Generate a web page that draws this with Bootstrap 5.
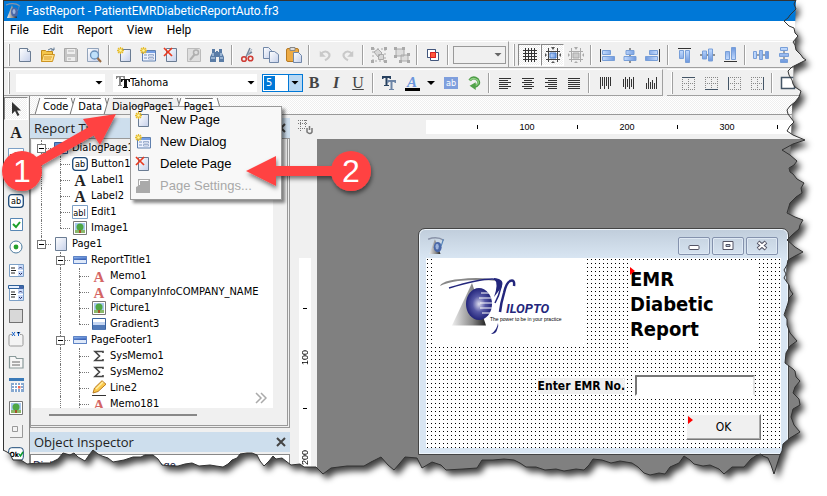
<!DOCTYPE html>
<html lang="en">
<head>
<meta charset="utf-8">
<meta name="viewport" content="width=device-width, initial-scale=1">
<title>FastReport - PatientEMRDiabeticReportAuto.fr3</title>
<link href="https://cdn.jsdelivr.net/npm/bootstrap@5.3.0/dist/css/bootstrap.min.css" rel="stylesheet">
<style>
body{font-family:"DejaVu Sans Condensed","DejaVu Sans",sans-serif;font-size:11px;line-height:16px;color:#000;background:#fff}
.shell{height:100vh;padding-left:3px;overflow:hidden}
.app{background:#f0f0f0;border-left:1px solid #333;border-top:1px solid #333}
button{background:none;border:0;padding:0;color:inherit}
svg{display:block;flex:none}
.titlebar{background:#0078d7;color:#fff;height:20px;padding-left:1px;gap:5px;font:12px/20px Roboto,sans-serif}
.menubar{background:#fff;height:19px;padding-left:6px;gap:14px;font:12px/18px Roboto,sans-serif}
.menubar a{color:#000;text-decoration:none}
.tools{height:28px;padding-top:1px;background:#f0f0f0}
.strip{height:27px;border-bottom:1px solid #a0a0a0;border-top:1px solid #fff;border-right:1px solid #a0a0a0;padding-left:4px;white-space:nowrap}
.strip.wide{flex:1 0 auto;border-right:0}
.grip{width:2px;height:22px;border-right:1px solid #a0a0a0;border-left:1px solid #fff;margin-right:3px;flex:none}
.tb{width:23px;height:22px;display:flex;align-items:center;justify-content:center;flex:none}
.tb.on{border:1px solid #fff;border-top-color:#888;border-left-color:#888;background:repeating-conic-gradient(#fff 0 25%,#eee 0 50%) 0 0/2px 2px}
.sep{width:8px;height:20px;flex:none;background:linear-gradient(90deg,transparent 3px,#a0a0a0 3px 4px,#fff 4px 5px,transparent 5px)}
.combo{position:relative;height:18px;background:#fff;flex:none}
.combo select{appearance:none;border:0;background:none;width:100%;height:100%;padding:0 14px 0 3px;font-size:11px;line-height:16px;outline:0;color:#000}
.combo::after{content:"";position:absolute;right:2px;top:7px;width:8px;height:4px;background:currentColor;clip-path:polygon(0 0,100% 0,50% 100%);pointer-events:none}
.c-style{width:89px;margin-left:3px}.c-font{width:144px;margin-left:8px}.c-font select{padding-left:17px}
.c-font svg{position:absolute;left:3px;top:1px}
.c-size{width:41px;border:1px solid #0078d7;margin-left:5px}
.c-size::before{content:"";position:absolute;right:0;top:0;bottom:0;width:14px;background:#b8d8f3;border-left:1px solid #0078d7}
.c-size select{position:relative;width:11px;background:#0078d7;color:#fff;padding:0 2px;display:block;height:14px;line-height:14px;margin:1px}
.c-size::after{right:3px;top:6px}
.c-zoom{width:53px;background:#f0f0f0;border:1px solid #999;color:#666;margin:0 2px 0 1px}
.c-zoom::after{top:6px;right:3px}
.lt{width:22px;font:bold 16px/20px "Liberation Serif",serif;color:#444}
.toolcol{width:26px;padding-top:1px;border-right:1px solid #888}
.toolcol .tb{width:24px;height:23px}
.tabs{height:19px;padding:2px 0 0 9px;border-bottom:1px solid #999;background:repeating-conic-gradient(#fff 0 25%,#efefef 0 50%) 0 0/2px 2px;gap:2px}
.pt{position:relative;height:16px;line-height:15px;padding:0 4px;border-top:1px solid #777;background:#fff;white-space:nowrap}
.pt::before,.pt::after{content:"";position:absolute;top:-1px;bottom:0;width:5px;background:inherit;border-left:1px solid #777}
.pt::before{left:-2px;transform:skewX(-16deg);z-index:0}
.pt::after{right:-2px;transform:skewX(16deg);border-left:0;border-right:1px solid #777}
.pt span{position:relative;z-index:1}
.pt.act{background:#f0f0f0}
.side{width:260px;padding-top:3px}
.ph{background:#cddeed;height:20px;padding:0 4px;font:13px/20px "Open Sans",sans-serif;color:#222}
.treebox{border:1px solid #999;border-width:1px 3px 3px 1px;border-style:solid double double solid;height:290px;padding:1px 14px 0 1px;margin-bottom:4px}
.tree{background:#fff;height:268px;padding:0;margin:0;list-style:none;overflow:hidden;position:relative}
.tree li{display:flex;height:16px;align-items:center;white-space:nowrap}
.tree b{width:19px;height:16px;flex:none;position:relative;display:flex;align-items:center;justify-content:center;font-weight:normal}
.tree b.v::before,.tree b.e::before{content:"";position:absolute;left:9px;top:0;height:16px;border-left:1px dotted #777}
.tree b.e::before{height:8px}
.tree b.h::after{content:"";position:absolute;left:9px;right:0;top:8px;border-top:1px dotted #777}
.tree b.t i{width:9px;height:9px;border:1px solid #777;background:#fff linear-gradient(#000,#000) center/5px 1px no-repeat;z-index:1;position:relative}
.tree li>span{padding:0 2px}
.sel{background:#f0f0f0}
.hsc{width:148px;height:2px;background:#888;margin:6px 0 0 17px}
.more-mark{position:absolute;right:6px;bottom:2px}
.insp{border:1px solid #888;border-bottom:0;background:#fff;height:40px;margin-top:2px;padding:3px 2px}
.insp select{border:0;appearance:none;background:none;width:100%;padding:0;color:#224}
.work{padding-left:7px}
.topr{height:24px;padding:5px 0}
.corner{width:129px;height:14px}
.ruler{background:#fff;font:9px/14px "Liberation Sans",sans-serif}
.ruler div{flex:none;width:50px;text-align:center;display:flex;align-items:center;justify-content:center}
.ruler i{width:1px;height:4px;background:#000}
.across{height:14px;padding-left:26px;overflow:hidden}
.down{width:12px;margin:119px 6px 0 2px;padding-top:25px;overflow:hidden}
.down div{width:12px;height:50px}.down i{width:4px;height:1px}
.down span{writing-mode:vertical-rl;transform:rotate(180deg);line-height:12px}
.canvas{background:#808080;position:relative;overflow:hidden}
.dlg{position:absolute;left:101px;top:89px;width:371px;border:1px solid #444;border-radius:7px 7px 0 0;background:linear-gradient(#c0cddb,#d9e6f3 30px);padding:0 7px 6px;box-shadow:inset 0 0 0 1px #eef5fb}
.dt{height:29px;padding:8px 3px 0 1px}
.dt button{width:32px;height:18px;border:1px solid #8492ad;border-radius:2px;box-shadow:inset 0 0 0 1px #dfe9f4;display:flex;align-items:center;justify-content:center}
.form{background:conic-gradient(from 270deg at 1px 1px,#000 90deg,#fff 0) 1px 1px/4px 4px;padding:1px 20px 8px 6px}
.logo{background:#fff;width:154px;height:88px}
.rt{background:#fff;width:130px;height:88px;margin:3px 3px 0 0;padding:5px 0 0 2px;font:bold 20px/25px "DejaVu Sans Condensed","DejaVu Sans",sans-serif;position:relative}
.flag{position:absolute;left:2px;top:5px;width:5px;height:8px;background:red;clip-path:polygon(0 0,100% 50%,0 100%)}
.fr{margin-top:25px;gap:10px;padding-right:6px}
.fr label{font-weight:bold;background:#f0f0f0;font-size:12px;line-height:16px}
.fr input{width:120px;height:21px;border:2px solid #777;border-color:#777 #e4e4e4 #fff #777;border-radius:0;outline:0;background:#fff}
.ok{position:relative;width:75px;height:26px;background:#f0f0f0;border:1px solid;border-color:#fff #777 #777 #fff;box-shadow:inset -1px -1px #aaa;margin-top:18px;font-size:12px}
.ok .flag{left:1px;top:1px}
.ctx{position:absolute;left:130px;top:106px;width:152px;height:94px;background:#f8f8f8;border:1px solid #999;box-shadow:3px 3px 3px #0007;padding:2px 0 0;font:13px/22px "Liberation Sans",sans-serif}
.ctx button{display:flex;align-items:center;height:22px;width:100%;padding-left:4px;gap:9px;text-align:left}
.ctx button:disabled{color:#a8a8a8}
.over{position:absolute;inset:0;width:100%;height:100%;pointer-events:none}
.over text{font:32px "Liberation Sans",sans-serif;fill:#fff;text-anchor:middle}
</style>
<script src="https://cdn.jsdelivr.net/npm/bootstrap@5.3.0/dist/js/bootstrap.bundle.min.js"></script>
</head>
<body>
<svg width="0" height="0" class="position-absolute" aria-hidden="true">
<defs>
<linearGradient id="pg" x2="1" y2="1"><stop stop-color="#fff"/><stop offset="1" stop-color="#c5d0ea"/></linearGradient>
<linearGradient id="bl" x2="1" y2="0"><stop stop-color="#c4dcff"/><stop offset="1" stop-color="#6d97dd"/></linearGradient>
<linearGradient id="bd" x2=".3" y2="1"><stop stop-color="#d5e5fb"/><stop offset=".5" stop-color="#6d97dd"/><stop offset="1" stop-color="#3f65b8"/></linearGradient>
<linearGradient id="gy"><stop stop-color="#eee"/><stop offset=".6" stop-color="#888"/><stop offset="1" stop-color="#222"/></linearGradient>
<radialGradient id="gl"><stop stop-color="#dde"/><stop offset=".5" stop-color="#5557a5"/><stop offset="1" stop-color="#22247a"/></radialGradient>
<symbol id="page" viewBox="0 0 16 16"><path d="M2.500 1.500h8l3 3v10h-11z" fill="url(#pg)" stroke="#6a7c93"/><path d="M10.500 1.500v3h3" fill="#fff" stroke="#6a7c93"/></symbol>
<symbol id="sheet" viewBox="0 0 16 16"><path d="M2.500 1.500h11v13h-11z" fill="url(#pg)" stroke="#6a7c93"/></symbol>
<symbol id="star" viewBox="0 0 16 16"><path d="M1 1l5 5M6 1L1 6M3.500 0v7M0 3.500h7" stroke="#e6bd2c" stroke-width="1.300"/><circle cx="3.500" cy="3.500" r="1.300" fill="#fff6a0"/></symbol>
<symbol id="newp" viewBox="0 0 16 16"><path d="M3.500 2.500h10v12h-10z" fill="url(#pg)" stroke="#6a7c93"/><use href="#star"/></symbol>
<symbol id="newd" viewBox="0 0 16 16"><path d="M2.500 3.500h13v10.500h-13z" fill="#eef3ff" stroke="#6080ae"/><path d="M3 4h12v2H3z" fill="#77a0e4"/><path d="M4 8h3M4 11h3" stroke="#7b93bb"/><path d="M8.500 7.500h5v1.500h-5zM8.500 10.500h5v1.500h-5z" fill="#fff" stroke="#7b93bb" stroke-width=".7"/><use href="#star"/></symbol>
<symbol id="del" viewBox="0 0 16 16"><path d="M3.500 1.500h10v13h-10z" fill="url(#pg)" stroke="#6a7c93"/><path d="M1 1l8 8M9 1L1 9" stroke="#e83a1f" stroke-width="1.700"/></symbol>
<symbol id="open" viewBox="0 0 16 16"><path d="M1.500 14.500v-11h4l1 1h6v3" fill="#f5c64a" stroke="#c08a1c"/><path d="M1.500 14.500l2-7h11l-2 7z" fill="#ffe08a" stroke="#cd9422"/><path d="M4 10h8M4 12h7" stroke="#d99a26"/><path d="M8 3q3-3 6 0M14 .5V3h-3" fill="none" stroke="#5f7791"/></symbol>
<symbol id="save" viewBox="0 0 16 16"><path d="M1.500 1.500h12l1 1v12h-13z" fill="#c6c6c6" stroke="#a8a8a8"/><path d="M4 2h8v5H4zM4 10h8v4H4z" fill="#eee"/><path d="M5 4h6M5 12h3" stroke="#b5b5b5"/></symbol>
<symbol id="prev" viewBox="0 0 16 16"><path d="M1.500 1.500h11v13h-11z" fill="url(#pg)" stroke="#93a4bb"/><circle cx="8.500" cy="8" r="4" fill="#bfe0fa" stroke="#6b90b9" stroke-width="1.300"/><path d="M11.500 11l3.500 4" stroke="#9a6b42" stroke-width="2"/></symbol>
<symbol id="tool" viewBox="0 0 16 16"><path d="M1.500 1.500h12l1 1v12h-13z" fill="#dedede" stroke="#bbb"/><path d="M4 13l5-6" stroke="#b0b0b0" stroke-width="2"/><circle cx="10" cy="5.500" r="2.500" fill="none" stroke="#b0b0b0" stroke-width="1.500"/></symbol>
<symbol id="find" viewBox="0 0 16 16"><path d="M3 2h3v3h1v-1h2v1h1V2h3v4l2 4v5h-5v-5H7v5H1v-5l2-4z" fill="#5a7ca6"/><path d="M2 11h4M11 11h3M4 6v3M12 6v3" stroke="#d6e8fb"/></symbol>
<symbol id="cut" viewBox="0 0 16 16"><path d="M10 1L6 10M7 8l5-3" stroke="#75869b" stroke-width="1.500"/><path d="M7 9l5-7" stroke="#a7b6c7"/><circle cx="4" cy="12" r="2.300" fill="none" stroke="#cf3c35" stroke-width="1.600"/><circle cx="10.500" cy="11.500" r="2.300" fill="none" stroke="#cf3c35" stroke-width="1.600"/></symbol>
<symbol id="copy" viewBox="0 0 16 16"><path d="M.5.5h5l3 3v8h-8z" fill="url(#pg)" stroke="#7187a8"/><path d="M6.500 4.500h5l4 3v8h-9z" fill="url(#pg)" stroke="#7187a8"/></symbol>
<symbol id="paste" viewBox="0 0 16 16"><rect x=".5" y="1.500" width="12" height="13" rx="1.500" fill="#edab45" stroke="#b67922"/><path d="M4 .5h5v3H4z" fill="#ddd" stroke="#888"/><path d="M7.500 5.500h5l3 3v7h-8z" fill="url(#pg)" stroke="#7187a8"/></symbol>
<symbol id="undo" viewBox="0 0 16 16"><path d="M3 7q6-6 10 0 1 4-5 7" fill="none" stroke="#c9c9c9" stroke-width="2.500"/><path d="M2 3v7h7z" fill="#c9c9c9"/></symbol>
<symbol id="redo" viewBox="0 0 16 16"><use href="#undo" transform="matrix(-1 0 0 1 16 0)"/></symbol>
<symbol id="grp" viewBox="0 0 16 16"><path d="M2 2h12v12H2z" fill="none" stroke="#aaa" stroke-dasharray="2 2"/><path d="M3 5l4-3 4 4-4 4zM7.500 7.500h5v5h-5z" fill="#d7d7d7" stroke="#aaa"/><path d="M0 0h3v3H0zM13 0h3v3h-3zM0 13h3v3H0zM13 13h3v3h-3z" fill="#aaa"/></symbol>
<symbol id="ungrp" viewBox="0 0 16 16"><path d="M2 2h8v7H2zM7 8h7v6H7z" fill="#ddd" stroke="#aaa"/><path d="M0 0h3v3H0zM8 0h3v3H8zM0 8h3v3H0zM13 6h3v3h-3zM5 13h3v3H5zM13 13h3v3h-3z" fill="#aaa"/></symbol>
<symbol id="over2" viewBox="0 0 16 16"><path d="M2.500 2.500h8v8h-8zM5.500 5.500h8v8h-8z" fill="#fff" stroke="#42567c"/><path d="M2.500 10.500v-8h8" fill="none" stroke="#42567c"/><path d="M5.500 5.500h5v5h-5z" fill="#ff5a3d" stroke="#d22"/></symbol>
<symbol id="grid" viewBox="0 0 16 16"><path d="M3.500 1v14M6.500 1v14M9.500 1v14M12.500 1v14M1 3.500h14M1 6.500h14M1 9.500h14M1 12.500h14" stroke="#333"/></symbol>
<symbol id="snap" viewBox="0 0 16 16"><path d="M3.500 1v14M12.500 1v14M1 4.500h14M1 12.500h14" stroke="#444"/><path d="M5 6h6v5H5z" fill="url(#bl)" stroke="#447bcb"/><path d="M6 0h4L8 3zM6 16h4l-2-2zM0 6v4l2-2zM16 6v4l-2-2z" fill="#555"/></symbol>
<symbol id="snapg" viewBox="0 0 16 16"><path d="M3.500 1v14M12.500 1v14M1 4.500h14M1 12.500h14" stroke="#aaa"/><path d="M5 6h6v5H5z" fill="#ccc" stroke="#aaa"/><path d="M6 0h4L8 3zM6 16h4l-2-2zM0 6v4l2-2zM16 6v4l-2-2z" fill="#aaa"/></symbol>
<symbol id="al" viewBox="0 0 16 16"><path d="M1.500 2v13" stroke="#333"/><path d="M3.500 3.500h8v4h-8zM3.500 9.500h12v4h-12z" fill="url(#bl)" stroke="#789fd8"/></symbol>
<symbol id="ac" viewBox="0 0 16 16"><path d="M8 1v15" stroke="#333"/><path d="M4 3.500h8v4H4zM2 9.500h12v4H2z" fill="url(#bl)" stroke="#789fd8"/></symbol>
<symbol id="ar" viewBox="0 0 16 16"><use href="#al" transform="matrix(-1 0 0 1 16 0)"/></symbol>
<symbol id="at" viewBox="0 0 16 16"><use href="#al" transform="matrix(0 1 1 0 0 0)"/></symbol>
<symbol id="am" viewBox="0 0 16 16"><use href="#ac" transform="matrix(0 1 1 0 0 0)"/></symbol>
<symbol id="ab" viewBox="0 0 16 16"><use href="#al" transform="matrix(0 -1 1 0 0 16)"/></symbol>
<symbol id="sh" viewBox="0 0 16 16"><path d="M0 8h16" stroke="#456"/><path d="M.5 4.500h3v7h-3zM6.500 3.500h3v9h-3zM12.500 4.500h3v7h-3z" fill="url(#bl)" stroke="#789fd8"/></symbol>
<symbol id="sv" viewBox="0 0 16 16"><use href="#sh" transform="matrix(0 1 1 0 0 0)"/></symbol>
<symbol id="tt" viewBox="0 0 14 14"><path d="M0 1h9v3H8L7 2H5v8h1v1H2v-1h1V2L1 3v1H0z" fill="#888"/><path d="M5 4h9v3h-1l-1-2h-1v7h1v1H7v-1h1V5H7L6 7H5z" fill="#111"/></symbol>
<symbol id="tb2" viewBox="0 0 16 16"><path d="M1 1h9v3H9L8 3H6.500v7H8v1H3v-1h1.500V3H3L2 4H1z" fill="#27415f"/><path d="M6 5h9v3h-1l-1-1h-1.500v7H13v1H8v-1h1.500V7H8L7 8H6z" fill="#6d85a6"/></symbol>
<symbol id="rot" viewBox="0 0 16 16"><path d="M3 5Q7 0 12 4q4 6-4 8" fill="none" stroke="#4b9a45" stroke-width="3.500"/><path d="M3 5Q7 1 12 4.500q3 5-4 7" fill="none" stroke="#90d184" stroke-width="1.500"/><path d="M10 7v9L3 11z" fill="#51a24a"/></symbol>
<symbol id="tl" viewBox="0 0 16 16"><path d="M2 3.500h12M2 5.500h9M2 7.500h12M2 9.500h9M2 11.500h12M2 13.500h9" stroke="#333"/></symbol>
<symbol id="tc" viewBox="0 0 16 16"><path d="M2 3.500h12M4 5.500h8M2 7.500h12M4 9.500h8M2 11.500h12M4 13.500h8" stroke="#333"/></symbol>
<symbol id="tr" viewBox="0 0 16 16"><path d="M2 3.500h12M5 5.500h9M2 7.500h12M5 9.500h9M2 11.500h12M5 13.500h9" stroke="#333"/></symbol>
<symbol id="tj" viewBox="0 0 16 16"><path d="M2 3.500h12M2 5.500h12M2 7.500h12M2 9.500h12M2 11.500h12M2 13.500h12" stroke="#333"/></symbol>
<symbol id="v1" viewBox="0 0 16 16"><path d="M3.500 2v12M5.500 2v9M7.500 2v12M9.500 2v9M11.500 2v12M13.500 2v9" stroke="#333"/></symbol>
<symbol id="v2" viewBox="0 0 16 16"><path d="M3.500 4v8M5.500 2v12M7.500 4v8M9.500 2v12M11.500 4v8M13.500 2v12" stroke="#333"/></symbol>
<symbol id="v3" viewBox="0 0 16 16"><path d="M3.500 8v6M5.500 3v11M7.500 7v7M9.500 5v9M11.500 8v6M13.500 2v12" stroke="#333"/></symbol>
<symbol id="bx" viewBox="0 0 16 16"><path d="M2.500 2v12M8.500 2v12M14.500 2v12M2 2.500h13M2 8.500h13M2 14.500h13" stroke="#888" stroke-dasharray="1 1"/></symbol>
<symbol id="bt" viewBox="0 0 16 16"><use href="#bx"/><path d="M2 2.500h13" stroke="#456"/></symbol>
<symbol id="bb" viewBox="0 0 16 16"><use href="#bx"/><path d="M2 14.500h13" stroke="#456"/></symbol>
<symbol id="ble" viewBox="0 0 16 16"><use href="#bx"/><path d="M2.500 2v13" stroke="#456"/></symbol>
<symbol id="bri" viewBox="0 0 16 16"><use href="#bx"/><path d="M14.500 2v13" stroke="#456"/></symbol>
<symbol id="ball" viewBox="0 0 16 16"><path d="M1.500 2.500h13v11h-13z" fill="#fff" stroke="#456" stroke-width="1.500"/></symbol>
<symbol id="cur" viewBox="0 0 16 16"><path d="M4 1v12l3-3 2.500 5 2-1L9 9.500h4z" fill="#333"/></symbol>
<symbol id="btn" viewBox="0 0 16 16"><rect x=".7" y="1.700" width="14.600" height="12.600" rx="3" fill="#fff" stroke="#1d4a78" stroke-width="1.300"/><text x="8" y="11" text-anchor="middle" font-family="DejaVu Sans Condensed,sans-serif" font-size="9">ab</text></symbol>
<symbol id="edt" viewBox="0 0 16 16"><path d="M.5 1.500h15v13H.5z" fill="#fff" stroke="#7da0c6"/><text x="7.500" y="11.500" text-anchor="middle" font-family="DejaVu Sans Condensed,sans-serif" font-size="9">abl</text></symbol>
<symbol id="okb" viewBox="0 0 16 16"><rect x=".7" y="1.700" width="14.600" height="12.600" rx="3" fill="#fff" stroke="#1d4a78"/><text x="1.500" y="10.500" font-family="DejaVu Sans Condensed,sans-serif" font-size="7" font-weight="bold">Ok</text><path d="M11 8l1.500 2L15 6" fill="none" stroke="#0a9a2a" stroke-width="1.500"/></symbol>
<symbol id="chk" viewBox="0 0 16 16"><path d="M2.500 2.500h12v12h-12z" fill="#fff" stroke="#5887b4"/><path d="M5 8l3 3 4-5" fill="none" stroke="#1ca02a" stroke-width="2"/></symbol>
<symbol id="rad" viewBox="0 0 16 16"><circle cx="8" cy="8" r="6" fill="#fff" stroke="#4d7b9f"/><circle cx="8" cy="8" r="2.400" fill="#25a02c"/></symbol>
<symbol id="lst" viewBox="0 0 16 16"><path d="M1.500 2.500h14v12h-14z" fill="#fff" stroke="#7da0c6"/><path d="M10 3h5v5h-5zM10 9h5v5h-5z" fill="#c9dbfb"/><path d="M3 6h4M3 8.500h5M3 11h4" stroke="#222"/><path d="M11 6.500l1.500-1.500L14 6.500M11 11l1.500 1.500L14 11" fill="none" stroke="#225"/></symbol>
<symbol id="cmb" viewBox="0 0 16 16"><use href="#lst" y="1"/><path d="M.5.500h15v3H.5z" fill="#e5efff" stroke="#2f6098"/><path d="M11 1h4v3h-4z" fill="#46a"/></symbol>
<symbol id="pnl" viewBox="0 0 16 16"><path d="M1.500 1.500h13v13h-13z" fill="#d8d8d8" stroke="#000" stroke-dasharray="1 1"/></symbol>
<symbol id="gbx" viewBox="0 0 16 16"><rect x="1" y="3.500" width="14" height="11.500" rx="1.500" fill="#f4f4f4" stroke="#999"/><path d="M4 1h8v4H4z" fill="#f4f4f4"/><path d="M4 1l3 4M7 1L4 5M9 1l1.500 2L12 1M10.500 3v2" stroke="#1560c8"/></symbol>
<symbol id="pgc" viewBox="0 0 16 16"><path d="M1.500 5V2.500h6l1 2h6.500v9.500H1.500z" fill="#f7f7f7" stroke="#8a9a9a" stroke-width="1.200"/><path d="M4 8h8M4 11h8" stroke="#666"/></symbol>
<symbol id="cal" viewBox="0 0 16 16"><path d="M1 1h15v3H1z" fill="#3a7ab8"/><path d="M3 6h13v9H3z" fill="#86a8d0"/><path d="M4 8.500h11M4 11.500h11M6.500 6v9M9.500 6v9M12.500 6v9" stroke="#fff"/><path d="M10 9h2.500v2.500H10z" fill="#e65"/></symbol>
<symbol id="pic" viewBox="0 0 16 16"><path d="M1.500 1.500h13v13h-13z" fill="#fff" stroke="#777"/><path d="M3 3h10v10H3z" fill="#a8c8ee"/><path d="M3 10h10v3H3z" fill="#8ab96a"/><circle cx="8" cy="7" r="3.500" fill="#4fa745"/><path d="M8 10v3" stroke="#a5522a" stroke-width="2"/></symbol>
<symbol id="bev" viewBox="0 0 16 16"><path d="M2 2h12v12H2z" fill="#f3f3f3"/><path d="M14.500 2v12.500H2" fill="none" stroke="#999"/><path d="M4.500 8.500v-5h5v5z" fill="none" stroke="#999"/></symbol>
<symbol id="dlgi" viewBox="0 0 16 16"><path d="M1.500 2.500h13v11h-13z" fill="#fff" stroke="#38619e"/><path d="M2 3h12v4H2z" fill="#5f8bcf"/></symbol>
<symbol id="band" viewBox="0 0 16 16"><path d="M1 4h14v8H1z" fill="#3d6ac1"/><path d="M1 4h14v4H1z" fill="url(#bd)"/><path d="M1 8h14v3.500H1z" fill="#dfe9f9"/><path d="M1.500 4.500h13v7h-13z" fill="none" stroke="#5e83c4"/></symbol>
<symbol id="grad" viewBox="0 0 16 16"><path d="M1.500 2.500h13v11h-13z" fill="#fff" stroke="#38619e"/><path d="M2 6h12v3H2z" fill="#c4d6f3"/><path d="M2 9h12v5H2z" fill="#5079b8"/></symbol>
<symbol id="pen" viewBox="0 0 16 16"><path d="M2 13l1.500-5L11 .7l4 3.500-8 7.300z" fill="#fbc94b" stroke="#b87b25"/><path d="M5 9l7-7" stroke="#fff0a8" stroke-width="1.500"/><path d="M1 15.500h14" stroke="#333"/></symbol>
<symbol id="la" viewBox="0 0 16 16"><text x="8" y="14" text-anchor="middle" font-family="Liberation Serif,serif" font-weight="bold" font-size="16" fill="#222">A</text></symbol>
<symbol id="lr" viewBox="0 0 16 16"><text x="8" y="13.500" text-anchor="middle" font-family="Liberation Serif,serif" font-weight="bold" font-size="15" fill="#d46565">A</text></symbol>
<symbol id="sum" viewBox="0 0 16 16"><path d="M12 5V3.500H4L8.500 8 4 12.500h8V11" fill="none" stroke="#444" stroke-width="1.600"/></symbol>
<symbol id="sgray" viewBox="0 0 16 16"><path d="M3 1h12v14H1V9l2-1z" fill="#aaa"/><path d="M4.500 7V2.500h9" fill="none" stroke="#fff"/></symbol>
<symbol id="app" viewBox="0 0 16 16"><path d="M7 2L2 15h10z" fill="url(#gy)"/><ellipse cx="9.500" cy="9" rx="3.500" ry="4.500" fill="#4a68a8"/><ellipse cx="9" cy="8.500" rx="1.500" ry="2.500" fill="#9db4dc"/><path d="M1 2q8-3 14 1" fill="none" stroke="#8a93a8" stroke-width="1.300"/><path d="M14.500 2q-1 4-2 6" stroke="#5584b8" fill="none"/></symbol>
</defs></svg>

<div class="shell position-relative">
<div class="app d-flex flex-column h-100">
  <header class="titlebar d-flex align-items-center"><svg width="16" height="16"><use href="#app"/></svg><span>FastReport - PatientEMRDiabeticReportAuto.fr3</span></header>
  <nav class="menubar d-flex" aria-label="Main"><a href="#">File</a><a href="#">Edit</a><a href="#">Report</a><a href="#">View</a><a href="#">Help</a></nav>

  <div class="tools d-flex" role="toolbar" aria-label="Standard">
    <div class="strip d-flex align-items-center"><span class="grip"></span>
      <button class="tb" aria-label="New"><svg width="16" height="16"><use href="#page"/></svg></button>
      <button class="tb" aria-label="Open"><svg width="16" height="16"><use href="#open"/></svg></button>
      <button class="tb" aria-label="Save"><svg width="16" height="16"><use href="#save"/></svg></button>
      <button class="tb" aria-label="Preview"><svg width="16" height="16"><use href="#prev"/></svg></button><span class="sep"></span>
      <button class="tb" aria-label="New page"><svg width="16" height="16"><use href="#newp"/></svg></button>
      <button class="tb" aria-label="New dialog"><svg width="16" height="16"><use href="#newd"/></svg></button>
      <button class="tb" aria-label="Delete page"><svg width="16" height="16"><use href="#del"/></svg></button>
      <button class="tb" aria-label="Page settings"><svg width="16" height="16"><use href="#tool"/></svg></button>
      <button class="tb" aria-label="Find"><svg width="16" height="16"><use href="#find"/></svg></button><span class="sep"></span>
      <button class="tb" aria-label="Cut"><svg width="16" height="16"><use href="#cut"/></svg></button>
      <button class="tb" aria-label="Copy"><svg width="16" height="16"><use href="#copy"/></svg></button>
      <button class="tb" aria-label="Paste"><svg width="16" height="16"><use href="#paste"/></svg></button><span class="sep"></span>
      <button class="tb" aria-label="Undo"><svg width="14" height="14"><use href="#undo"/></svg></button>
      <button class="tb" aria-label="Redo"><svg width="14" height="14"><use href="#redo"/></svg></button><span class="sep"></span>
      <button class="tb" aria-label="Group"><svg width="16" height="16"><use href="#grp"/></svg></button>
      <button class="tb" aria-label="Ungroup"><svg width="16" height="16"><use href="#ungrp"/></svg></button><span class="sep"></span>
      <button class="tb" aria-label="Overlap"><svg width="16" height="16"><use href="#over2"/></svg></button><span class="sep"></span>
      <div class="combo c-zoom"><select aria-label="Zoom"><option></option></select></div>
    </div>
    <div class="strip wide d-flex align-items-center"><span class="grip"></span>
      <button class="tb on" aria-label="Show grid"><svg width="16" height="16"><use href="#grid"/></svg></button>
      <button class="tb on" aria-label="Align to grid"><svg width="16" height="16"><use href="#snap"/></svg></button>
      <button class="tb" aria-label="Fit to grid"><svg width="16" height="16"><use href="#snapg"/></svg></button><span class="sep"></span>
      <button class="tb" aria-label="Align left"><svg width="16" height="16"><use href="#al"/></svg></button>
      <button class="tb" aria-label="Align centre"><svg width="16" height="16"><use href="#ac"/></svg></button>
      <button class="tb" aria-label="Align right"><svg width="16" height="16"><use href="#ar"/></svg></button><span class="sep"></span>
      <button class="tb" aria-label="Align top"><svg width="16" height="16"><use href="#at"/></svg></button>
      <button class="tb" aria-label="Align middle"><svg width="16" height="16"><use href="#am"/></svg></button>
      <button class="tb" aria-label="Align bottom"><svg width="16" height="16"><use href="#ab"/></svg></button><span class="sep"></span>
      <button class="tb" aria-label="Space horizontally"><svg width="16" height="16"><use href="#sh"/></svg></button>
      <button class="tb" aria-label="Space vertically"><svg width="16" height="16"><use href="#sv"/></svg></button>
    </div>
  </div>
  <div class="tools d-flex" role="toolbar" aria-label="Text">
    <div class="strip d-flex align-items-center me-1"><span class="grip"></span>
      <div class="combo c-style"><select aria-label="Style"><option></option></select></div>
      <div class="combo c-font"><svg width="14" height="14"><use href="#tt"/></svg><select aria-label="Font"><option>Tahoma</option></select></div>
      <div class="combo c-size"><select aria-label="Size"><option>5</option></select></div>
      <button class="tb lt">B</button><button class="tb lt fst-italic">I</button><button class="tb lt fw-normal text-decoration-underline">U</button><span class="sep"></span>
      <button class="tb" aria-label="Font settings"><svg width="16" height="16"><use href="#tb2"/></svg></button>
      <button class="tb" aria-label="Font colour"><svg width="16" height="18" viewBox="0 0 16 18"><text x="8" y="13" text-anchor="middle" font-family="Liberation Serif,serif" font-style="italic" font-weight="bold" font-size="15" fill="#6b96dd">A</text><path d="M1 14h15v3H1z"/></svg></button>
      <button class="tb" style="width:16px" aria-label="Colour list"><svg width="8" height="4"><path d="M0 0h8L4 4z"/></svg></button>
      <button class="tb" aria-label="Highlight"><svg width="14" height="12" viewBox="0 0 14 12"><path d="M0 0h14v12H0z" fill="#7f9fdd"/><text x="7" y="9" text-anchor="middle" font-size="9" fill="#fff">ab</text></svg></button>
      <button class="tb" aria-label="Rotation"><svg width="14" height="14"><use href="#rot"/></svg></button><span class="sep"></span>
      <button class="tb" aria-label="Text left"><svg width="16" height="16"><use href="#tl"/></svg></button>
      <button class="tb" aria-label="Text centre"><svg width="16" height="16"><use href="#tc"/></svg></button>
      <button class="tb" aria-label="Text right"><svg width="16" height="16"><use href="#tr"/></svg></button>
      <button class="tb" aria-label="Justify"><svg width="16" height="16"><use href="#tj"/></svg></button><span class="sep"></span>
      <button class="tb" aria-label="Text top"><svg width="16" height="16"><use href="#v1"/></svg></button>
      <button class="tb" aria-label="Text middle"><svg width="16" height="16"><use href="#v2"/></svg></button>
      <button class="tb" aria-label="Text bottom"><svg width="16" height="16"><use href="#v3"/></svg></button>
    </div>
    <div class="strip wide d-flex align-items-center"><span class="grip"></span>
      <button class="tb" aria-label="Top line"><svg width="16" height="16"><use href="#bt"/></svg></button>
      <button class="tb" aria-label="Bottom line"><svg width="16" height="16"><use href="#bb"/></svg></button>
      <button class="tb" aria-label="Left line"><svg width="16" height="16"><use href="#ble"/></svg></button>
      <button class="tb" aria-label="Right line"><svg width="16" height="16"><use href="#bri"/></svg></button><span class="sep"></span>
      <button class="tb" aria-label="All lines"><svg width="16" height="16"><use href="#ball"/></svg></button>
    </div>
  </div>

  <div class="d-flex flex-grow-1 overflow-hidden">
    <div class="toolcol flex-shrink-0" role="toolbar" aria-label="Objects">
      <button class="tb on" aria-label="Select"><svg width="16" height="16"><use href="#cur"/></svg></button>
      <button class="tb" aria-label="Label"><svg width="16" height="16"><use href="#la"/></svg></button>
      <button class="tb" aria-label="Edit"><svg width="16" height="16"><use href="#edt"/></svg></button>
      <button class="tb" aria-label="Memo"><svg width="16" height="16"><use href="#edt"/></svg></button>
      <button class="tb" aria-label="Button"><svg width="16" height="16"><use href="#btn"/></svg></button>
      <button class="tb" aria-label="Check box"><svg width="16" height="16"><use href="#chk"/></svg></button>
      <button class="tb" aria-label="Radio"><svg width="16" height="16"><use href="#rad"/></svg></button>
      <button class="tb" aria-label="List"><svg width="16" height="16"><use href="#lst"/></svg></button>
      <button class="tb" aria-label="Combo"><svg width="16" height="16"><use href="#cmb"/></svg></button>
      <button class="tb" aria-label="Panel"><svg width="16" height="16"><use href="#pnl"/></svg></button>
      <button class="tb" aria-label="Group box"><svg width="16" height="16"><use href="#gbx"/></svg></button>
      <button class="tb" aria-label="Page control"><svg width="16" height="16"><use href="#pgc"/></svg></button>
      <button class="tb" aria-label="Date"><svg width="16" height="16"><use href="#cal"/></svg></button>
      <button class="tb" aria-label="Image"><svg width="16" height="16"><use href="#pic"/></svg></button>
      <button class="tb" aria-label="Bevel"><svg width="16" height="16"><use href="#bev"/></svg></button>
      <button class="tb" aria-label="Bit button"><svg width="16" height="16"><use href="#okb"/></svg></button>
    </div>
    <div class="d-flex flex-column flex-grow-1 overflow-hidden">
      <div class="tabs d-flex flex-shrink-0">
        <button class="pt"><span>Code</span></button><button class="pt"><span>Data</span></button><button class="pt act"><span>DialogPage1</span></button><button class="pt"><span>Page1</span></button>
      </div>
      <div class="d-flex flex-grow-1 overflow-hidden">
        <aside class="side flex-shrink-0">
          <div class="ph d-flex justify-content-between align-items-center"><span>Report Tree</span><button aria-label="Close tree"><svg width="10" height="10"><path d="M1 1l8 8M9 1L1 9" stroke="#444" stroke-width="2"/></svg></button></div>
          <div class="treebox">
            <ul class="tree">
              <li><b class="t v h"><i></i></b><b><svg width="16" height="16"><use href="#dlgi"/></svg></b><span class="sel">DialogPage1</span></li>
              <li><b class="v"></b><b class="v h"></b><b><svg width="16" height="16"><use href="#btn"/></svg></b><span>Button1</span></li>
              <li><b class="v"></b><b class="v h"></b><b><svg width="16" height="16"><use href="#la"/></svg></b><span>Label1</span></li>
              <li><b class="v"></b><b class="v h"></b><b><svg width="16" height="16"><use href="#la"/></svg></b><span>Label2</span></li>
              <li><b class="v"></b><b class="v h"></b><b><svg width="16" height="16"><use href="#edt"/></svg></b><span>Edit1</span></li>
              <li><b class="v"></b><b class="e h"></b><b><svg width="16" height="16"><use href="#pic"/></svg></b><span>Image1</span></li>
              <li><b class="t e h"><i></i></b><b><svg width="16" height="16"><use href="#sheet"/></svg></b><span>Page1</span></li>
              <li><b></b><b class="t v h"><i></i></b><b><svg width="16" height="16"><use href="#band"/></svg></b><span>ReportTitle1</span></li>
              <li><b></b><b class="v"></b><b class="v h"></b><b><svg width="16" height="16"><use href="#lr"/></svg></b><span>Memo1</span></li>
              <li><b></b><b class="v"></b><b class="v h"></b><b><svg width="16" height="16"><use href="#lr"/></svg></b><span>CompanyInfoCOMPANY_NAME</span></li>
              <li><b></b><b class="v"></b><b class="v h"></b><b><svg width="16" height="16"><use href="#pic"/></svg></b><span>Picture1</span></li>
              <li><b></b><b class="v"></b><b class="e h"></b><b><svg width="16" height="16"><use href="#grad"/></svg></b><span>Gradient3</span></li>
              <li><b></b><b class="t v h"><i></i></b><b><svg width="16" height="16"><use href="#band"/></svg></b><span>PageFooter1</span></li>
              <li><b></b><b class="v"></b><b class="v h"></b><b><svg width="16" height="16"><use href="#sum"/></svg></b><span>SysMemo1</span></li>
              <li><b></b><b class="v"></b><b class="v h"></b><b><svg width="16" height="16"><use href="#sum"/></svg></b><span>SysMemo2</span></li>
              <li><b></b><b class="v"></b><b class="v h"></b><b><svg width="16" height="16"><use href="#pen"/></svg></b><span>Line2</span></li>
              <li><b></b><b class="v"></b><b class="v h"></b><b><svg width="16" height="16"><use href="#lr"/></svg></b><span>Memo181</span></li>
              <li class="more-mark"><svg width="12" height="12"><path d="M1 1l5 5-5 5M6 1l5 5-5 5" fill="none" stroke="#aaa" stroke-width="1.500"/></svg></li>
            </ul>
            <div class="hsc"></div>
          </div>
          <div class="ph d-flex justify-content-between align-items-center"><span>Object Inspector</span><button aria-label="Close inspector"><svg width="10" height="10"><path d="M1 1l8 8M9 1L1 9" stroke="#444" stroke-width="2"/></svg></button></div>
          <div class="insp"><select aria-label="Object"><option>DialogPage1: TfrxDialogPage</option></select></div>
        </aside>
        <main class="work d-flex flex-column flex-grow-1 overflow-hidden">
          <div class="topr d-flex flex-shrink-0">
            <div class="corner flex-shrink-0"><svg width="18" height="16"><path d="M1 .5h10M1 3.500h10M1 8.500h8M3.500 0v11M8.500 0v8" stroke="#777" stroke-dasharray="1 1"/><path d="M10 8v4q3 3 5 0V8M12.500 6v4" fill="none" stroke="#777" stroke-width="1.500"/></svg></div>
            <div class="ruler across d-flex flex-grow-1"><div><i></i></div><div>100</div><div><i></i></div><div>200</div><div><i></i></div><div>300</div><div><i></i></div></div>
          </div>
          <div class="d-flex flex-grow-1 overflow-hidden">
            <div class="ruler down flex-shrink-0"><div><i></i></div><div><span>100</span></div><div><i></i></div><div><span>200</span></div></div>
            <div class="canvas flex-grow-1">
              <section class="dlg" aria-label="Dialog">
                <div class="dt d-flex">
                  <svg width="18" height="18" class="me-auto"><use href="#app"/></svg>
                  <div class="d-flex" style="gap:2px">
                    <button aria-label="Minimise"><svg width="12" height="12"><rect x="1" y="5.500" width="10" height="4" rx="1" fill="#fff" stroke="#556"/></svg></button>
                    <button aria-label="Maximise"><svg width="12" height="12"><path d="M1 1.500h10v8H1z" fill="#fff" stroke="#556"/><path d="M4 4.500h4v2H4z" fill="#bcd" stroke="#556"/></svg></button>
                    <button aria-label="Close"><svg width="12" height="12"><path d="M2 2l8 7M10 2L2 9" stroke="#556" stroke-width="4"/><path d="M2.500 2.500l7 6M9.500 2.500l-7 6" stroke="#fff" stroke-width="2"/></svg></button>
                  </div>
                </div>
                <div class="form">
                  <div class="d-flex justify-content-between">
                    <div class="logo"><svg width="154" height="88" viewBox="432 259 154 88" role="img" aria-label="Filopto">
                      <path d="M472 283L452 325.500h34z" fill="url(#gy)"/>
                      <ellipse cx="479" cy="304" rx="13" ry="16" fill="url(#gl)"/>
                      <path d="M481 293h9M479 298h12M480 303h12M480 308h12M482 313h9" stroke="#fff"/>
                      <path d="M440 286q2-7 36-8 15 0 22 3-18-2-40 0-12 2-18 5z" fill="#888"/>
                      <path d="M449 288q30-9 43-9 11 0 9 8-2 9-6 16" fill="none" stroke="#23267c" stroke-width="1.500"/>
                      <path d="M494 278q12 1 7 10l-7 9q5-14 0-18z" fill="#23267c"/>
                      <path d="M514 286q1-7-4-5-4 2-6 12-3 10-4 19" fill="none" stroke="#23267c" stroke-width="2.500"/>
                      <path d="M498 323q-1 7-7 11 5 0 6-4 2-4 1-7z" fill="#23267c"/>
                      <text x="506" y="313" font-family="Roboto,sans-serif" font-style="italic" font-weight="bold" font-size="13" fill="#23267c">ILOPTO</text>
                      <text x="490" y="321" font-family="Liberation Sans,sans-serif" font-size="5">The power to be in your practice</text>
                    </svg></div>
                    <div class="rt">EMR<br>Diabetic<br>Report<span class="flag"></span></div>
                  </div>
                  <div class="fr d-flex justify-content-end align-items-center"><label for="emr">Enter EMR No.</label><input id="emr" type="text"></div>
                  <div class="d-flex justify-content-end"><button class="ok">OK<span class="flag"></span></button></div>
                </div>
              </section>
            </div>
          </div>
        </main>
      </div>
    </div>
  </div>
</div>

<div class="ctx" role="menu">
  <button role="menuitem"><svg width="16" height="16"><use href="#newp"/></svg>New Page</button>
  <button role="menuitem"><svg width="16" height="16"><use href="#newd"/></svg>New Dialog</button>
  <button role="menuitem"><svg width="16" height="16"><use href="#del"/></svg>Delete Page</button>
  <button role="menuitem" disabled><svg width="16" height="16"><use href="#sgray"/></svg>Page Settings...</button>
</div>

<svg class="over" viewBox="0 0 827 496" preserveAspectRatio="none">
  <defs>
    <filter id="soft" x="-10%" y="-10%" width="120%" height="120%"><feGaussianBlur stdDeviation="3"/></filter>
    <filter id="drop" x="-20%" y="-20%" width="150%" height="160%"><feDropShadow dx="1" dy="3" stdDeviation="2" flood-opacity=".5"/></filter>
    <path id="edge" d="M796 0L794 4 796 9 793 12 790 15 788 18 784 21 787 24 789 26 794 28 795 33 798 36 793 42 795 45 796 50 801 55 803 58 806 60 800 63 792 67 788 71 789 75 792 80 793 84 795 87 801 91 799 97 795 102 790 106 787 110 788 114 791 118 794 122 790 126 787 131 793 135 805 140 793 144 782 150 790 155 797 161 794 165 789 168 790 172 793 174 797 179 804 183 801 188 802 193 796 197 790 203 787 213 795 217 803 220 800 225 799 229 792 235 787 240 795 247 803 252 795 256 788 260 787 265 784 270 786 274 784 278 789 285 790 290 793 294 789 298 788 303 784 315 787 319 787 325 790 333 797 341 790 346 786 353 785 363 793 369 795 371 796 377 800 381 795 387 793 393 799 399 800 405 793 409 791 417 794 425 800 432 790 438 783 444 782 451 780 455 774 474 771 465 768 458 763 456 761 454 757 455 751 459 744 467 732 467 724 474 719 469 710 465 703 466 694 464 690 460 684 456 679 463 670 467 665 474 659 473 650 475 644 473 638 467 632 463 620 461 611 463 602 460 593 459 589 465 584 470 576 469 564 471 556 469 545 470 536 467 526 467 520 463 514 460 504 459 493 460 482 460 477 468 463 469 446 470 441 465 432 462 422 468 417 458 405 457 400 463 394 470 388 465 381 457 371 462 364 466 347 466 331 468 323 474 319 470 316 467 304 467 300 464 291 465 282 458 276 459 273 456 269 461 264 466 260 461 257 455 252 453 247 453 240 454 237 458 232 460 228 464 223 467 216 466 210 465 199 466 192 463 185 464 178 466 172 466 162 465 158 459 153 455 145 455 141 457 133 457 124 460 113 462 108 458 102 456 98 454 93 450 89 455 85 461 78 457 74 453 70 455 63 453 58 459 50 463 38 463 27 464 21 460 13 460 10 454 7 452 3 450"/>
    <mask id="outer" maskUnits="userSpaceOnUse" x="0" y="0" width="827" height="496"><path d="M0 0h827v496H0z" fill="#fff"/><use href="#edge"/><path d="M3 0H796L780 440 3 450z"/></mask>
  </defs>
  <g mask="url(#outer)"><path d="M0 0h827v496H0z" fill="#fff"/><use href="#edge" transform="translate(4 5)" fill="#000" fill-opacity=".75" filter="url(#soft)"/></g>
  <use href="#edge" fill="none" stroke="#333"/>
  <g filter="url(#drop)"><path d="M22 171L95 129" stroke="#ff4343" stroke-width="10"/><path d="M116 114L83 119 100 145z" fill="#ff4343"/><circle cx="22" cy="171" r="20" fill="#ff4343"/></g>
  <text x="22" y="182">1</text>
  <g filter="url(#drop)"><path d="M246 171l30-15v10h75v10h-75v10z" fill="#ff4343"/><circle cx="351" cy="171" r="20" fill="#ff4343"/></g>
  <text x="351" y="182">2</text>
</svg>
</div>
</body>
</html>
